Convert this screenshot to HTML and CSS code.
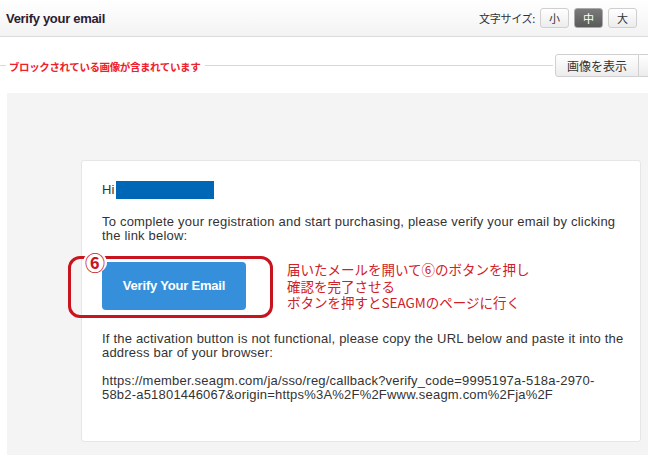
FILE: index.html
```html
<!DOCTYPE html>
<html lang="ja">
<head>
<meta charset="utf-8">
<title>Verify your email</title>
<link rel="stylesheet" href="styles.css">
</head>
<body>
<header class="topbar">
  <h1 class="title">Verify your email</h1>
  <div class="sizes">
    <span class="size-label">文字サイズ:</span>
    <button class="size-btn">小</button>
    <button class="size-btn active">中</button>
    <button class="size-btn">大</button>
  </div>
</header>
<div class="blocked">
  <span class="rule rule-short"></span>
  <span class="blocked-text">ブロックされている画像が含まれています</span>
  <span class="rule rule-long"></span>
  <div class="img-btns">
    <button class="img-btn">画像を表示</button>
    <button class="img-btn">設定</button>
  </div>
</div>
<main class="mailbg">
  <div class="card">
    <p class="hi">Hi <span class="redact"></span></p>
    <p class="para intro">To complete your registration and start purchasing, please verify your email by clicking the link below:</p>
    <div class="cta-row">
      <div class="annot-box">
        <span class="badge">⑥</span>
        <a class="verify-btn">Verify Your Email</a>
      </div>
      <div class="annot-text">
        <div>届いたメールを開いて⑥のボタンを押し</div>
        <div>確認を完了させる</div>
        <div>ボタンを押すとSEAGMのページに行く</div>
      </div>
    </div>
    <p class="para fallback">If the activation button is not functional, please copy the URL below and paste it into the address bar of your browser:</p>
    <p class="para url">https://member.seagm.com/ja/sso/reg/callback?verify_code=9995197a-518a-2970-58b2-a51801446067&amp;origin=https%3A%2F%2Fwww.seagm.com%2Fja%2F</p>
  </div>
</main>
</body>
</html>
```
FILE: styles.css
```css
html, body {
  margin: 0;
  padding: 0;
  background: #fff;
  width: 648px;
  height: 455px;
  overflow: hidden;
  font-family: "Liberation Sans", "Noto Sans CJK JP", sans-serif;
}
.topbar {
  height: 36px;
  border-bottom: 1px solid #dcdcdc;
  background: linear-gradient(#ffffff, #f3f3f3);
  display: flex;
  align-items: center;
  justify-content: space-between;
  padding: 0 11px 0 6px;
}
.title {
  margin: 0;
  font-size: 13px;
  font-weight: bold;
  color: #2a2030;
  letter-spacing: -0.3px;
}
.sizes {
  display: flex;
  align-items: center;
  gap: 5px;
}
.size-label {
  font-family: "Noto Sans CJK JP", sans-serif;
  font-size: 11px;
  color: #333;
  letter-spacing: -0.3px;
}
.size-btn {
  width: 29px;
  height: 20px;
  padding: 0;
  border: 1px solid #cfcfcf;
  border-radius: 3px;
  background: linear-gradient(#ffffff, #ececec);
  font-family: "Noto Sans CJK JP", sans-serif;
  font-size: 11px;
  line-height: 18px;
  color: #333;
}
.size-btn.active {
  background: linear-gradient(#7a7a7a, #5a5a5a);
  border-color: #aaa;
  color: #fff;
}
.blocked {
  height: 56px;
  display: flex;
  align-items: center;
  overflow: hidden;
}
.rule {
  height: 1px;
  background: #d8d8d8;
  margin-top: 1px;
}
.rule-short {
  width: 6px;
  flex: none;
}
.rule-long {
  flex: 1;
  margin-left: 5px;
}
.blocked-text {
  font-family: "Noto Sans CJK JP", sans-serif;
  font-size: 10.5px;
  font-weight: bold;
  color: #f0202a;
  padding-left: 3px;
  letter-spacing: -0.4px;
  margin-top: 2px;
}
.img-btns {
  display: flex;
  flex: none;
  width: 93px;
  overflow: hidden;
  margin-left: 2px;
}
.img-btn {
  flex: none;
  height: 23px;
  padding: 0 11px;
  border: 1px solid #d0d0d0;
  border-radius: 3px 0 0 3px;
  background: linear-gradient(#ffffff, #ececec);
  font-family: "Noto Sans CJK JP", sans-serif;
  font-size: 12px;
  color: #333;
}
.img-btn + .img-btn {
  border-radius: 0;
  border-left: none;
}
.mailbg {
  margin-left: 7px;
  background: #f4f4f4;
  height: 362px;
  padding: 67px 7px 0 74px;
  box-sizing: border-box;
}
.card {
  background: #fff;
  border: 1px solid #e6e6e6;
  border-radius: 3px;
  height: 282px;
  box-sizing: border-box;
  padding: 20px 14px 0 20px;
  font-size: 13px;
  line-height: 14px;
  color: #333;
}
.card p {
  margin: 0;
}
.hi {
  display: flex;
  align-items: center;
  height: 18px;
  font-size: 13px;
  gap: 2px;
}
.redact {
  display: inline-block;
  width: 98px;
  height: 18px;
  background: #0066b6;
}
.card .para {
  letter-spacing: 0.2px;
}
.card .intro {
  margin-top: 16px;
}
.card .fallback {
  margin-top: 14px;
}
.card .url {
  margin-top: 14px;
  word-break: normal;
  overflow-wrap: anywhere;
}
.cta-row {
  display: flex;
  align-items: center;
  margin: 13px 0 0 -34px;
}
.annot-box {
  position: relative;
  flex: none;
  width: 205px;
  height: 62px;
  border: 3px solid #c8141e;
  border-radius: 12px;
  display: flex;
  align-items: flex-start;
  padding: 3px 0 0 31px;
  box-sizing: border-box;
}
.badge {
  position: absolute;
  z-index: 1;
  left: 12px;
  top: -7px;
  width: 24px;
  height: 21px;
  background: #fff;
  border-radius: 50%;
  color: #c8141e;
  font-family: "Noto Sans CJK JP", sans-serif;
  font-weight: bold;
  font-size: 20px;
  line-height: 21px;
  text-align: center;
}
.verify-btn {
  display: flex;
  align-items: center;
  justify-content: center;
  width: 144px;
  height: 48px;
  background: #368fdb;
  border-radius: 4px;
  color: #fff;
  font-weight: bold;
  font-size: 13px;
  letter-spacing: -0.2px;
}
.annot-text {
  margin-left: 14px;
  font-family: "Noto Sans CJK JP", sans-serif;
  font-size: 13.5px;
  line-height: 16.5px;
  color: #d02028;
  padding-bottom: 2px;
}
```
